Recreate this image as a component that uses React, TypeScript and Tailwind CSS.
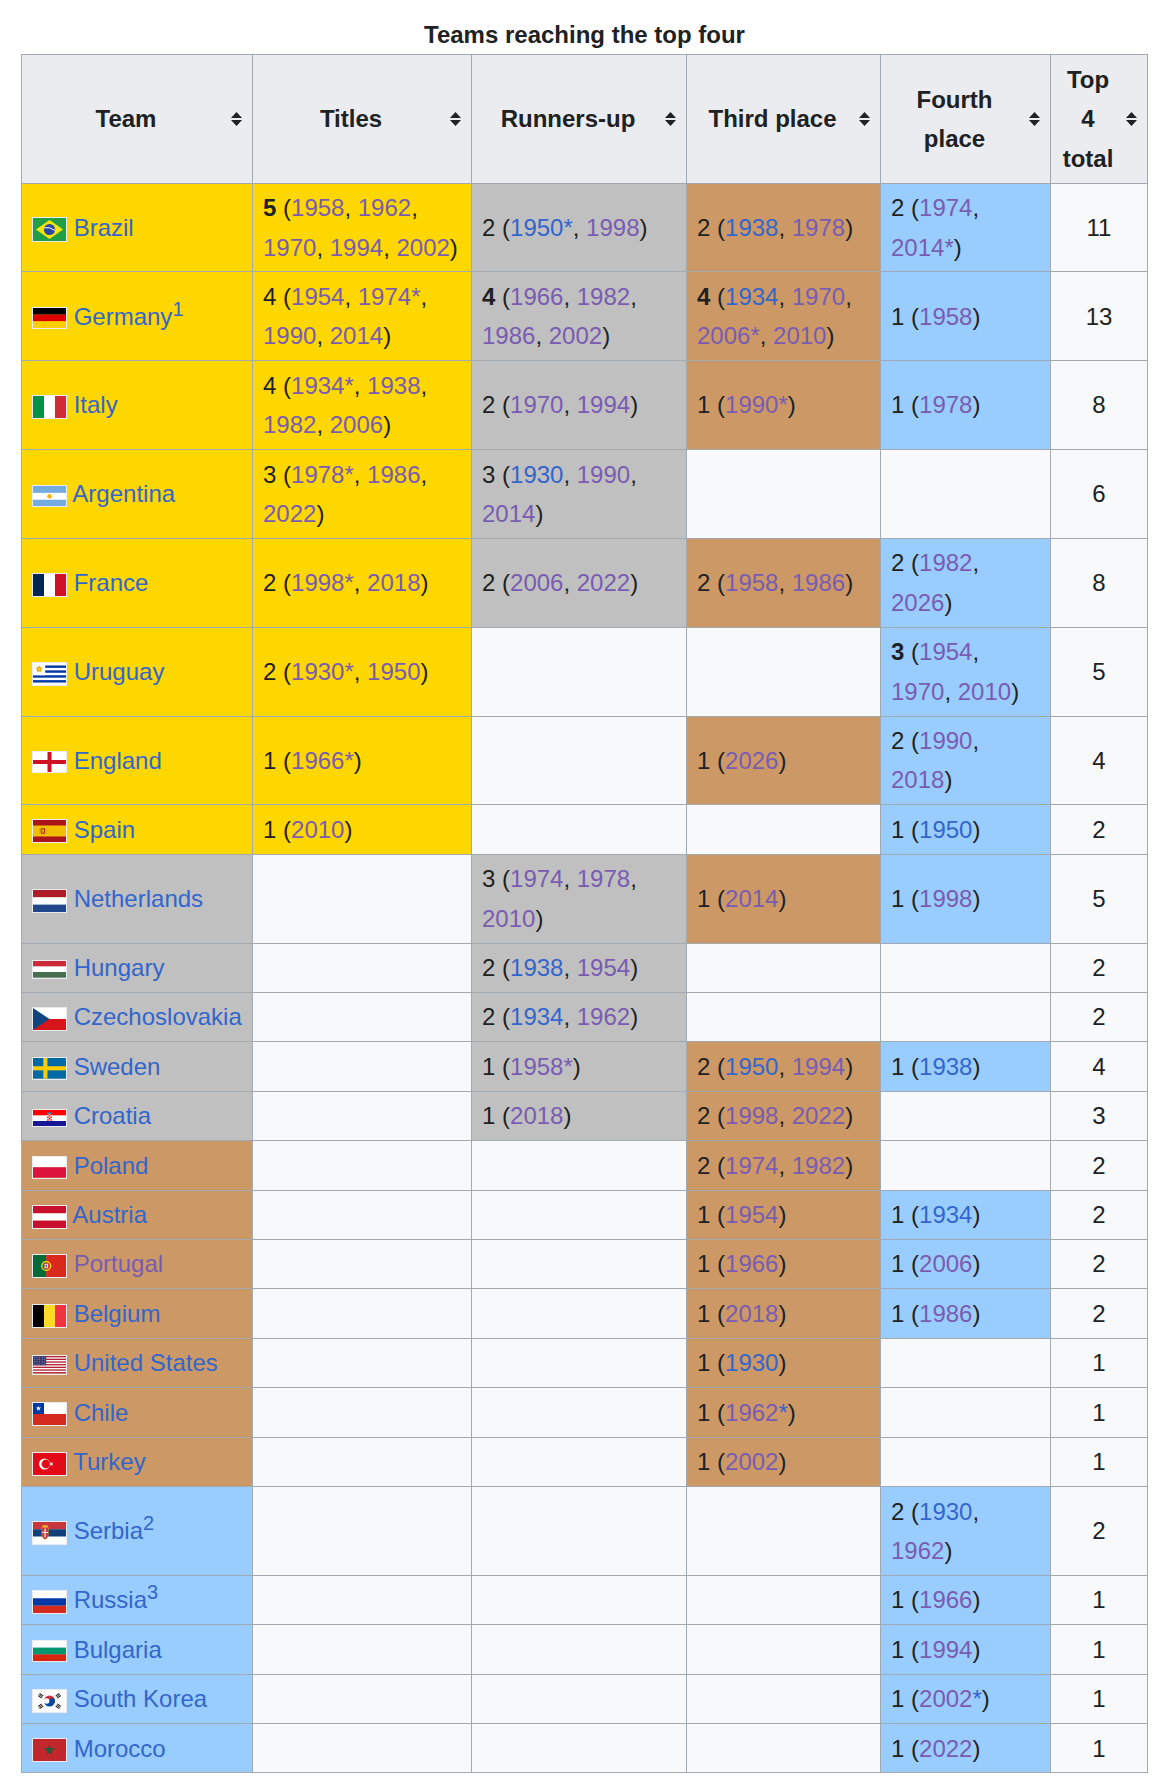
import { Fragment } from 'react';

type Cell = { n: number; bold?: boolean; years: string[] } | null;

interface TeamRow {
  team: string;
  flag: string;
  tier: 'g' | 's' | 'b' | 'f';
  sup?: string;
  visited?: boolean;
  titles: Cell;
  runners: Cell;
  third: Cell;
  fourth: Cell;
  total: number;
}

const c = (n: number, years: string[], bold = false): Cell => ({ n, years, bold });

// year tokens: first char = link colour (b = blue, p = visited purple), "|" splits parts
const rows: TeamRow[] = [
  { team: 'Brazil', flag: 'br', tier: 'g', titles: c(5, ['p1958', 'p1962', 'p1970', 'p1994', 'p2002'], true), runners: c(2, ['b1950*', 'p1998']), third: c(2, ['b1938', 'p1978']), fourth: c(2, ['p1974', 'p2014*']), total: 11 },
  { team: 'Germany', sup: '1', flag: 'de', tier: 'g', titles: c(4, ['p1954', 'p1974*', 'p1990', 'p2014']), runners: c(4, ['p1966', 'p1982', 'p1986', 'p2002'], true), third: c(4, ['b1934', 'p1970', 'p2006*', 'p2010'], true), fourth: c(1, ['p1958']), total: 13 },
  { team: 'Italy', flag: 'it', tier: 'g', titles: c(4, ['p1934*', 'p1938', 'p1982', 'p2006']), runners: c(2, ['p1970', 'p1994']), third: c(1, ['p1990*']), fourth: c(1, ['p1978']), total: 8 },
  { team: 'Argentina', flag: 'ar', tier: 'g', titles: c(3, ['p1978*', 'p1986', 'p2022']), runners: c(3, ['b1930', 'p1990', 'p2014']), third: null, fourth: null, total: 6 },
  { team: 'France', flag: 'fr', tier: 'g', titles: c(2, ['p1998*', 'p2018']), runners: c(2, ['p2006', 'p2022']), third: c(2, ['p1958', 'p1986']), fourth: c(2, ['p1982', 'p2026']), total: 8 },
  { team: 'Uruguay', flag: 'uy', tier: 'g', titles: c(2, ['p1930*', 'p1950']), runners: null, third: null, fourth: c(3, ['p1954', 'p1970', 'p2010'], true), total: 5 },
  { team: 'England', flag: 'en', tier: 'g', titles: c(1, ['p1966*']), runners: null, third: c(1, ['p2026']), fourth: c(2, ['p1990', 'p2018']), total: 4 },
  { team: 'Spain', flag: 'es', tier: 'g', titles: c(1, ['p2010']), runners: null, third: null, fourth: c(1, ['b1950']), total: 2 },
  { team: 'Netherlands', flag: 'nl', tier: 's', titles: null, runners: c(3, ['p1974', 'p1978', 'p2010']), third: c(1, ['p2014']), fourth: c(1, ['p1998']), total: 5 },
  { team: 'Hungary', flag: 'hu', tier: 's', titles: null, runners: c(2, ['b1938', 'p1954']), third: null, fourth: null, total: 2 },
  { team: 'Czechoslovakia', flag: 'cs', tier: 's', titles: null, runners: c(2, ['b1934', 'p1962']), third: null, fourth: null, total: 2 },
  { team: 'Sweden', flag: 'se', tier: 's', titles: null, runners: c(1, ['p1958*']), third: c(2, ['b1950', 'p1994']), fourth: c(1, ['b1938']), total: 4 },
  { team: 'Croatia', flag: 'hr', tier: 's', titles: null, runners: c(1, ['p2018']), third: c(2, ['p1998', 'p2022']), fourth: null, total: 3 },
  { team: 'Poland', flag: 'pl', tier: 'b', titles: null, runners: null, third: c(2, ['p1974', 'p1982']), fourth: null, total: 2 },
  { team: 'Austria', flag: 'at', tier: 'b', titles: null, runners: null, third: c(1, ['p1954']), fourth: c(1, ['b1934']), total: 2 },
  { team: 'Portugal', flag: 'pt', tier: 'b', visited: true, titles: null, runners: null, third: c(1, ['p1966']), fourth: c(1, ['p2006']), total: 2 },
  { team: 'Belgium', flag: 'be', tier: 'b', titles: null, runners: null, third: c(1, ['p2018']), fourth: c(1, ['p1986']), total: 2 },
  { team: 'United States', flag: 'us', tier: 'b', titles: null, runners: null, third: c(1, ['b1930']), fourth: null, total: 1 },
  { team: 'Chile', flag: 'cl', tier: 'b', titles: null, runners: null, third: c(1, ['p1962|b*']), fourth: null, total: 1 },
  { team: 'Turkey', flag: 'tr', tier: 'b', titles: null, runners: null, third: c(1, ['p2002']), fourth: null, total: 1 },
  { team: 'Serbia', sup: '2', flag: 'rs', tier: 'f', titles: null, runners: null, third: null, fourth: c(2, ['b1930', 'p1962']), total: 2 },
  { team: 'Russia', sup: '3', flag: 'ru', tier: 'f', titles: null, runners: null, third: null, fourth: c(1, ['p1966']), total: 1 },
  { team: 'Bulgaria', flag: 'bg', tier: 'f', titles: null, runners: null, third: null, fourth: c(1, ['p1994']), total: 1 },
  { team: 'South Korea', flag: 'kr', tier: 'f', titles: null, runners: null, third: null, fourth: c(1, ['p2002|b*']), total: 1 },
  { team: 'Morocco', flag: 'ma', tier: 'f', titles: null, runners: null, third: null, fourth: c(1, ['p2022']), total: 1 },
];

const tierBg = {
  g: 'bg-[#ffd700]',
  s: 'bg-[#c0c0c0]',
  b: 'bg-[#cc9966]',
  f: 'bg-[#9acdff]',
};

const star = (cx: number, cy: number, r: number) => {
  const pts: string[] = [];
  for (let i = 0; i < 10; i++) {
    const a = -Math.PI / 2 + (i * Math.PI) / 5;
    const rr = i % 2 === 0 ? r : r * 0.38;
    pts.push(`${(cx + rr * Math.cos(a)).toFixed(2)},${(cy + rr * Math.sin(a)).toFixed(2)}`);
  }
  return pts.join(' ');
};

function FlagArt({ code }: { code: string }) {
  switch (code) {
    case 'br':
      return (
        <svg viewBox="0 0 100 70" width="33" height="23" preserveAspectRatio="none" className="block">
          <rect width="100" height="70" fill="#229e45" />
          <polygon points="9,35 50,6 91,35 50,64" fill="#f8e509" />
          <circle cx="50" cy="35" r="17" fill="#2b49a3" />
          <path d="M33.5 30 Q50 25 66.5 38" stroke="#fff" strokeWidth="3" fill="none" />
        </svg>
      );
    case 'de':
      return (
        <svg viewBox="0 0 5 3" width="33" height="20" preserveAspectRatio="none" className="block">
          <rect width="5" height="1" fill="#000" />
          <rect y="1" width="5" height="1" fill="#dd0000" />
          <rect y="2" width="5" height="1" fill="#ffce00" />
        </svg>
      );
    case 'it':
      return (
        <svg viewBox="0 0 3 2" width="33" height="22" preserveAspectRatio="none" className="block">
          <rect width="1" height="2" fill="#009246" />
          <rect x="1" width="1" height="2" fill="#fff" />
          <rect x="2" width="1" height="2" fill="#ce2b37" />
        </svg>
      );
    case 'ar':
      return (
        <svg viewBox="0 0 16 10" width="33" height="20.6" preserveAspectRatio="none" className="block">
          <rect width="16" height="10" fill="#74acdf" />
          <rect y="3.33" width="16" height="3.34" fill="#fff" />
          <circle cx="8" cy="5" r="1.1" fill="#f6b40e" />
        </svg>
      );
    case 'fr':
      return (
        <svg viewBox="0 0 3 2" width="33" height="22" preserveAspectRatio="none" className="block">
          <rect width="1" height="2" fill="#002654" />
          <rect x="1" width="1" height="2" fill="#fff" />
          <rect x="2" width="1" height="2" fill="#ce1126" />
        </svg>
      );
    case 'uy':
      return (
        <svg viewBox="0 0 27 18" width="33" height="22" preserveAspectRatio="none" className="block">
          <rect width="27" height="18" fill="#fff" />
          {[2, 6, 10, 14].map((y) => (
            <rect key={y} y={y} width="27" height="2" fill="#0038a8" />
          ))}
          <rect width="10" height="10" fill="#fff" />
          <polygon points={star(5, 5, 3.6)} fill="#fcd116" />
          <circle cx="5" cy="5" r="1.8" fill="#fcd116" stroke="#7b3f00" strokeWidth="0.3" />
        </svg>
      );
    case 'en':
      return (
        <svg viewBox="0 0 50 30" width="33" height="20" preserveAspectRatio="none" className="block">
          <rect width="50" height="30" fill="#fff" />
          <rect x="22" width="6" height="30" fill="#ce1124" />
          <rect y="12" width="50" height="6" fill="#ce1124" />
        </svg>
      );
    case 'es':
      return (
        <svg viewBox="0 0 30 20" width="33" height="22" preserveAspectRatio="none" className="block">
          <rect width="30" height="20" fill="#aa151b" />
          <rect y="5" width="30" height="10" fill="#f1bf00" />
          <rect x="7" y="7.5" width="4" height="5" rx="1" fill="#ad1519" />
          <rect x="7.8" y="8.3" width="2.4" height="3.4" fill="#c8b100" />
          <rect x="5.6" y="7.5" width="0.8" height="5" fill="#c8b100" />
          <rect x="11.6" y="7.5" width="0.8" height="5" fill="#c8b100" />
        </svg>
      );
    case 'nl':
      return (
        <svg viewBox="0 0 3 3" width="33" height="22" preserveAspectRatio="none" className="block">
          <rect width="3" height="1" fill="#ae1c28" />
          <rect y="1" width="3" height="1" fill="#fff" />
          <rect y="2" width="3" height="1" fill="#21468b" />
        </svg>
      );
    case 'hu':
      return (
        <svg viewBox="0 0 3 3" width="33" height="16.5" preserveAspectRatio="none" className="block">
          <rect width="3" height="1" fill="#ce2939" />
          <rect y="1" width="3" height="1" fill="#fff" />
          <rect y="2" width="3" height="1" fill="#477050" />
        </svg>
      );
    case 'cs':
      return (
        <svg viewBox="0 0 30 20" width="33" height="22" preserveAspectRatio="none" className="block">
          <rect width="30" height="10" fill="#fff" />
          <rect y="10" width="30" height="10" fill="#d7141a" />
          <polygon points="0,0 15,10 0,20" fill="#11457e" />
        </svg>
      );
    case 'se':
      return (
        <svg viewBox="0 0 16 10" width="33" height="20.6" preserveAspectRatio="none" className="block">
          <rect width="16" height="10" fill="#006aa7" />
          <rect x="5" width="2" height="10" fill="#fecc00" />
          <rect y="4" width="16" height="2" fill="#fecc00" />
        </svg>
      );
    case 'hr':
      return (
        <svg viewBox="0 0 40 20" width="33" height="16.5" preserveAspectRatio="none" className="block">
          <rect width="40" height="6.67" fill="#ff0000" />
          <rect y="6.67" width="40" height="6.66" fill="#fff" />
          <rect y="13.33" width="40" height="6.67" fill="#171796" />
          <rect x="17" y="4.5" width="6" height="8.5" fill="#fff" />
          {[0, 1, 2, 3, 4].map((r) =>
            [0, 1, 2].map((k) =>
              (r + k) % 2 === 0 ? (
                <rect key={`${r}-${k}`} x={17 + k * 2} y={4.5 + r * 1.7} width="2" height="1.7" fill="#ff0000" />
              ) : null,
            ),
          )}
          <rect x="17" y="3" width="6" height="1.5" fill="#0093dd" />
        </svg>
      );
    case 'pl':
      return (
        <svg viewBox="0 0 16 10" width="33" height="20.6" preserveAspectRatio="none" className="block">
          <rect width="16" height="5" fill="#fff" />
          <rect y="5" width="16" height="5" fill="#dc143c" />
        </svg>
      );
    case 'at':
      return (
        <svg viewBox="0 0 3 3" width="33" height="22" preserveAspectRatio="none" className="block">
          <rect width="3" height="1" fill="#c8102e" />
          <rect y="1" width="3" height="1" fill="#fff" />
          <rect y="2" width="3" height="1" fill="#c8102e" />
        </svg>
      );
    case 'pt':
      return (
        <svg viewBox="0 0 30 20" width="33" height="22" preserveAspectRatio="none" className="block">
          <rect width="12" height="20" fill="#046a38" />
          <rect x="12" width="18" height="20" fill="#da291c" />
          <circle cx="12" cy="10" r="4" fill="none" stroke="#ffe900" strokeWidth="1.1" />
          <rect x="10.2" y="7.8" width="3.6" height="4.4" rx="0.8" fill="#fff" stroke="#da291c" strokeWidth="0.6" />
          <rect x="11.4" y="8.8" width="1.2" height="2.4" fill="#1e50a0" />
        </svg>
      );
    case 'be':
      return (
        <svg viewBox="0 0 3 2" width="33" height="22" preserveAspectRatio="none" className="block">
          <rect width="1" height="2" fill="#000" />
          <rect x="1" width="1" height="2" fill="#fdda24" />
          <rect x="2" width="1" height="2" fill="#ef3340" />
        </svg>
      );
    case 'us':
      return (
        <svg viewBox="0 0 38 20" width="33" height="17.4" preserveAspectRatio="none" className="block">
          <rect width="38" height="20" fill="#fff" />
          {[0, 2, 4, 6, 8, 10, 12].map((i) => (
            <rect key={i} y={(i * 20) / 13} width="38" height={20 / 13} fill="#b22234" />
          ))}
          <rect width="15.2" height={(7 * 20) / 13} fill="#3c3b6e" />
          {[0, 1, 2, 3].map((r) =>
            [0, 1, 2, 3, 4].map((k) => (
              <circle key={`${r}-${k}`} cx={1.6 + k * 3} cy={1.5 + r * 2.6} r="0.45" fill="#fff" />
            )),
          )}
        </svg>
      );
    case 'cl':
      return (
        <svg viewBox="0 0 30 20" width="33" height="22" preserveAspectRatio="none" className="block">
          <rect width="30" height="10" fill="#fff" />
          <rect y="10" width="30" height="10" fill="#d52b1e" />
          <rect width="10" height="10" fill="#0039a6" />
          <polygon points={star(5, 5, 2.6)} fill="#fff" />
        </svg>
      );
    case 'tr':
      return (
        <svg viewBox="0 0 30 20" width="33" height="22" preserveAspectRatio="none" className="block">
          <rect width="30" height="20" fill="#e30a17" />
          <circle cx="10.5" cy="10" r="5" fill="#fff" />
          <circle cx="11.75" cy="10" r="4" fill="#e30a17" />
          <polygon points={star(16.6, 10, 2.2)} fill="#fff" transform="rotate(-90 16.6 10)" />
        </svg>
      );
    case 'rs':
      return (
        <svg viewBox="0 0 30 20" width="33" height="22" preserveAspectRatio="none" className="block">
          <rect width="30" height="6.67" fill="#c6363c" />
          <rect y="6.67" width="30" height="6.66" fill="#0c4076" />
          <rect y="13.33" width="30" height="6.67" fill="#fff" />
          <rect x="8.6" y="3" width="4.8" height="2" fill="#edb92e" />
          <path d="M8 5 H14 V11 Q14 15 11 16 Q8 15 8 11 Z" fill="#c6363c" stroke="#edb92e" strokeWidth="0.4" />
          <rect x="10.5" y="6" width="1" height="8" fill="#fff" />
          <rect x="8.5" y="9" width="5" height="1" fill="#fff" />
        </svg>
      );
    case 'ru':
      return (
        <svg viewBox="0 0 3 3" width="33" height="22" preserveAspectRatio="none" className="block">
          <rect width="3" height="1" fill="#fff" />
          <rect y="1" width="3" height="1" fill="#0039a6" />
          <rect y="2" width="3" height="1" fill="#d52b1e" />
        </svg>
      );
    case 'bg':
      return (
        <svg viewBox="0 0 3 3" width="33" height="20" preserveAspectRatio="none" className="block">
          <rect width="3" height="1" fill="#fff" />
          <rect y="1" width="3" height="1" fill="#00966e" />
          <rect y="2" width="3" height="1" fill="#d62612" />
        </svg>
      );
    case 'kr':
      return (
        <svg viewBox="0 0 30 20" width="33" height="22" className="block">
          <rect width="30" height="20" fill="#fff" />
          <path d="M10 10 A5 5 0 0 1 20 10 A2.5 2.5 0 0 1 15 10 A2.5 2.5 0 0 0 10 10 Z" fill="#cd2e3a" />
          <path d="M10 10 A5 5 0 0 0 20 10 A2.5 2.5 0 0 0 15 10 A2.5 2.5 0 0 1 10 10 Z" fill="#0047a0" />
          {[
            [7, 5.2, 34],
            [23, 5.2, -34],
            [7, 14.8, -34],
            [23, 14.8, 34],
          ].map(([x, y, a]) => (
            <g key={`${x}-${y}`} transform={`translate(${x} ${y}) rotate(${a})`}>
              <rect x="-2" y="-1.6" width="4" height="0.7" fill="#000" />
              <rect x="-2" y="-0.35" width="4" height="0.7" fill="#000" />
              <rect x="-2" y="0.9" width="4" height="0.7" fill="#000" />
            </g>
          ))}
        </svg>
      );
    case 'ma':
      return (
        <svg viewBox="0 0 30 20" width="33" height="22" preserveAspectRatio="none" className="block">
          <rect width="30" height="20" fill="#c1272d" />
          <polygon
            points="15,6 16.8,13.5 10.4,8.8 19.6,8.8 13.2,13.5"
            fill="none"
            stroke="#006233"
            strokeWidth="0.8"
            strokeLinejoin="round"
          />
        </svg>
      );
    default:
      return null;
  }
}

function Flag({ code }: { code: string }) {
  return (
    <span className="inline-block align-middle border border-[#eaecf0] leading-none">
      <FlagArt code={code} />
    </span>
  );
}

function SortIcon() {
  return (
    <svg
      width="11"
      height="14"
      viewBox="0 0 11 14"
      className="absolute right-[10px] top-1/2 -translate-y-1/2"
    >
      <path d="M5.5 0 L11 6 H0 Z M0 8 H11 L5.5 14 Z" fill="#202122" />
    </svg>
  );
}

function Year({ token }: { token: string }) {
  return (
    <>
      {token.split('|').map((part, i) => (
        <a
          key={i}
          className={part[0] === 'b' ? 'text-[#3366cc]' : 'text-[#795cb2]'}
        >
          {part.slice(1)}
        </a>
      ))}
    </>
  );
}

function Result({ cell }: { cell: NonNullable<Cell> }) {
  return (
    <>
      {cell.bold ? <span className="font-bold">{cell.n}</span> : cell.n} (
      {cell.years.map((y, i) => (
        <Fragment key={y}>
          {i > 0 && ', '}
          <Year token={y} />
        </Fragment>
      ))}
      )
    </>
  );
}

const td = 'border border-[#a2a9b1] px-[10px] py-[4.5px]';
const th = 'relative border border-[#a2a9b1] bg-[#eaecf0] pl-[10px] pr-[32px] py-[4.5px] font-bold text-center';

function ResultCell({ cell, bg }: { cell: Cell; bg: string }) {
  if (!cell) return <td className={`${td} bg-[#f8f9fa]`} />;
  return (
    <td className={`${td} ${bg}`}>
      <Result cell={cell} />
    </td>
  );
}

export default function App() {
  return (
    <div className="min-h-screen bg-white pt-[15px] pl-[21px] font-['Liberation_Sans',Arial,sans-serif] text-[#202122]">
      <table className="table-fixed border-collapse w-[1126px] text-[24px] leading-[39.4px]">
        <caption className="font-bold text-center">Teams reaching the top four</caption>
        <colgroup>
          <col className="w-[231px]" />
          <col className="w-[219px]" />
          <col className="w-[215px]" />
          <col className="w-[194px]" />
          <col className="w-[170px]" />
          <col className="w-[97px]" />
        </colgroup>
        <thead>
          <tr>
            <th className={th}>Team<SortIcon /></th>
            <th className={th}>Titles<SortIcon /></th>
            <th className={th}>Runners-up<SortIcon /></th>
            <th className={th}>Third place<SortIcon /></th>
            <th className={th}>Fourth place<SortIcon /></th>
            <th className={th}>Top 4 total<SortIcon /></th>
          </tr>
        </thead>
        <tbody>
          {rows.map((r) => (
            <tr key={r.team}>
              <td className={`${td} ${tierBg[r.tier]} whitespace-nowrap`}>
                <Flag code={r.flag} />{' '}
                <a className={r.visited ? 'text-[#795cb2]' : 'text-[#3366cc]'}>{r.team}</a>
                {r.sup && (
                  <sup className="relative -top-[9px] align-baseline text-[20px] leading-none text-[#3366cc]">
                    {r.sup}
                  </sup>
                )}
              </td>
              <ResultCell cell={r.titles} bg="bg-[#ffd700]" />
              <ResultCell cell={r.runners} bg="bg-[#c0c0c0]" />
              <ResultCell cell={r.third} bg="bg-[#cc9966]" />
              <ResultCell cell={r.fourth} bg="bg-[#9acdff]" />
              <td className={`${td} bg-[#f8f9fa] text-center`}>{r.total}</td>
            </tr>
          ))}
        </tbody>
      </table>
    </div>
  );
}
